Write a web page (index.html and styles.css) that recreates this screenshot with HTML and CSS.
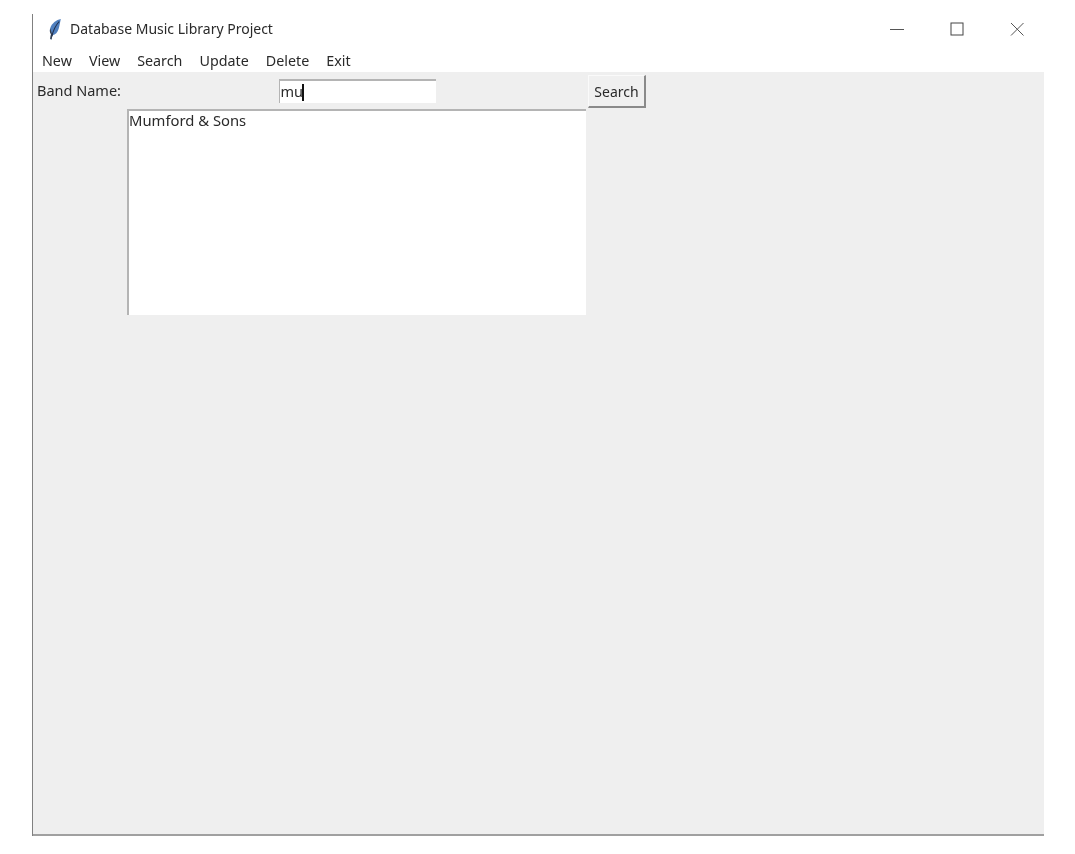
FILE: index.html
```html
<!DOCTYPE html>
<html lang="en">
<head>
<meta charset="utf-8">
<title>Database Music Library Project</title>
<link rel="stylesheet" href="styles.css">
</head>
<body>
<div class="window">
  <header class="titlebar">
    <svg class="feather" width="14" height="22" viewBox="0 0 14 22">
      <path d="M12.800 1C8.500 1.800 3.600 5.400 2.200 10.200c-.7 2.500-.3 4.700.8 5.900L2.200 21l1.300.4 1-4.200c3-.3 5.100-3 6.100-6.200 1-3.400 1.600-7.200 2.200-10z" fill="#4f7fbe"/>
      <path d="M2.200 10.200c-.7 2.500-.3 4.700.8 5.900L2.200 21l1.300.4 1-4.200C3.500 15 3 12.500 2.200 10.200z" fill="#39404c"/>
      <path d="M11.200 3.500C8 7 5.500 11.500 3.900 18" stroke="#1f2f4d" stroke-width="1.100" fill="none"/>
    </svg>
    <span class="title">Database Music Library Project</span>
    <div class="controls">
      <svg class="ctl" width="14" height="14" viewBox="0 0 14 14"><path d="M0 7.500h14" stroke="#555" fill="none"/></svg>
      <svg class="ctl" width="14" height="14" viewBox="0 0 14 14"><rect x="1" y="1" width="12" height="12" stroke="#444" fill="none"/></svg>
      <svg class="ctl" width="14" height="14" viewBox="0 0 14 14"><path d="M1 1l12.500 12.500M13.500 1L1 13.500" stroke="#555" fill="none"/></svg>
    </div>
  </header>
  <nav class="menubar">
    <span>New</span><span>View</span><span>Search</span><span>Update</span><span>Delete</span><span>Exit</span>
  </nav>
  <main class="content">
    <label class="label">Band Name:</label>
    <div class="entry">mu<span class="caret"></span></div>
    <button class="button">Search</button>
    <div class="listbox">Mumford &amp; Sons</div>
  </main>
</div>
</body>
</html>
```
FILE: styles.css
```css
html, body {
  margin: 0;
  padding: 0;
  background: #fff;
}
body {
  font-family: "Noto Sans", "Open Sans", sans-serif;
  font-size: 14px;
  color: #2a2a2a;
  padding-top: 14px;
}
.window {
  margin-left: 32px;
  width: 1012px;
  height: 822px;
  box-sizing: border-box;
  border-left: 1px solid #808080;
  display: flex;
  flex-direction: column;
  filter: blur(0.35px);
}
.titlebar {
  height: 30px;
  display: flex;
  align-items: center;
  padding-left: 15px;
  background: #fff;
}
.feather {
  margin-right: 8px;
}
.title {
  line-height: 30px;
}
.controls {
  margin-left: auto;
  display: flex;
  gap: 46px;
  margin-right: 20px;
}
.menubar {
  height: 28px;
  box-sizing: border-box;
  padding: 4px 0 0 9px;
  display: flex;
  align-items: center;
  gap: 17px;
  font-size: 14.3px;
  background: #fff;
}
.content {
  flex: 1;
  background: #efefef;
  border-bottom: 2px solid #a0a0a0;
  display: grid;
  grid-template-columns: 94px 459px 60px 1fr;
  grid-template-rows: 37px 206px 1fr;
  align-items: start;
  font-size: 14.5px;
}
.label {
  padding: 8px 0 0 4px;
  line-height: 20px;
  white-space: nowrap;
}
.entry {
  justify-self: center;
  margin: 7px 0 0 1px;
  width: 157px;
  height: 24px;
  box-sizing: border-box;
  background: #fff;
  border-top: 2px solid #b4b4b4;
  border-left: 1px solid #b4b4b4;
  line-height: 20px;
  padding: 0 0 2px 1px;
  display: flex;
  align-items: center;
}
.caret {
  display: inline-block;
  width: 2px;
  height: 17px;
  margin: 2px 0 0 -1px;
  background: #111;
}
.button {
  margin: 3px 0 0 2px;
  width: 58px;
  height: 33px;
  box-sizing: border-box;
  padding: 0;
  font: inherit;
  font-size: 14px;
  color: inherit;
  background: #f0f0f0;
  border: 1px solid;
  border-color: #fafafa #8a8a8a #8a8a8a #fafafa;
  border-width: 1px 2px 2px 1px;
}
.listbox {
  grid-column: 2;
  grid-row: 2;
  height: 206px;
  box-sizing: border-box;
  background: #fff;
  border-top: 2px solid #b4b4b4;
  border-left: 2px solid #b4b4b4;
  font-size: 14.8px;
  line-height: 18px;
  padding-left: 0;
}
```
